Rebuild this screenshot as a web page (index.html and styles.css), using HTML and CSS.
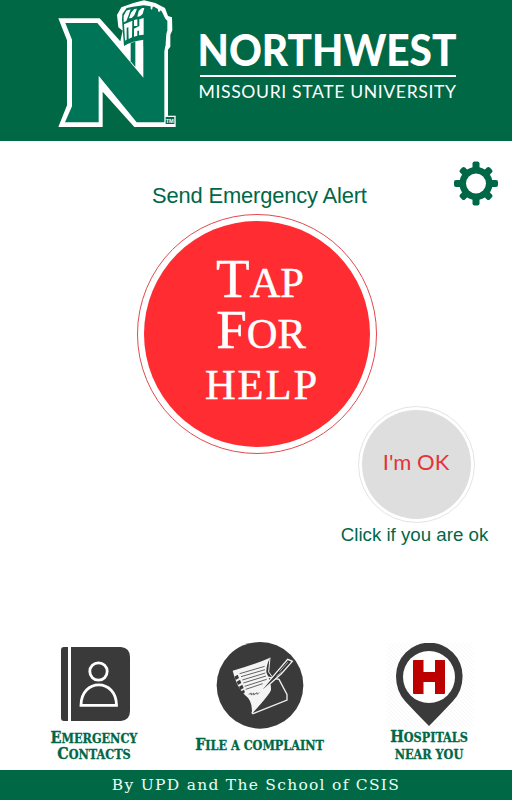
FILE: index.html
```
<!DOCTYPE html>
<html lang="en">
<head>
<meta charset="utf-8">
<title>Northwest Emergency Alert</title>
<link rel="stylesheet" href="styles.css">
</head>
<body>
<header class="banner">
  <svg class="emblem" viewBox="0 0 405 420" aria-hidden="true">
    <path class="white" d="M25 55H149L211 124L218 92L205 82L201 45L214 22L250 9L282 1L316 9L345 24L354 48L366 52L367 91L361 104V140L354 149V347H377V381H253L158 275V381H25L51 316V121Z"/>
    <path class="teal" d="M46 69H142L280 233V110L281 38L297 29L329 38L344 66L350 92L346 138L343 154V367H260L146 227V367H45L66 319V119Z"/>
    <path class="teal" d="M217 42L230 24L249 20L281 16L312 20L335 34L346 56L352 62L352 92L346 104V138H281V119Q245 123 222 138L219 100L216 60Z"/>
    <path class="white" d="M221 47l8-15 13-4-7 20-6 15-8 4ZM243 38l10-11 8-1-8 20-8 8-8 1ZM266 33l10-9h7l-5 18-8 7-8 1Z"/>
    <path class="white" d="M222 73L247 62L246 112L236 117L235 82L230 83V119L225 122ZM252 60L262 58V78H252ZM268 58L281 54V104L267 106V92H262V107L252 110V86L268 78Z"/>
    <path class="teal" d="M242 129L256 125V201L242 184Z"/>
    <path class="white" d="M302 17h7l-3 12-4-2ZM324 24l7 5-3 8-4-4Z"/>
    <path d="M347 351H373V372H347Z" fill="#006845"/>
    <text class="tm" x="347" y="368">TM</text>
  </svg>
  <svg class="wordmark" viewBox="0 0 260 70" role="img">
    <text class="name" x="-1.500" y="32.500" textLength="259" lengthAdjust="spacingAndGlyphs">NORTHWEST</text>
    <rect x="1" y="42" width="256" height="2" class="white"/>
    <text class="sub" x="-.5" y="64.500" textLength="257.500">MISSOURI STATE UNIVERSITY</text>
  </svg>
</header>
<main>
  <div class="top-row">
    <h1>Send Emergency Alert</h1>
    <button class="settings" aria-label="Settings">
      <svg viewBox="-22 -22 44 44">
        <g class="gear"><rect x="-3.500" y="-22" width="7" height="44" rx="2"/><rect x="-3.500" y="-21" width="7" height="42" rx="2" transform="rotate(45)"/><rect x="-3.500" y="-22" width="7" height="44" rx="2" transform="rotate(90)"/><rect x="-3.500" y="-21" width="7" height="42" rx="2" transform="rotate(135)"/><circle r="16.600"/></g>
        <circle r="10" fill="#fff"/>
      </svg>
    </button>
  </div>
  <button class="help">
    <span class="disc"><span class="l1">T<small>AP</small></span><span class="l2">F<small>OR</small></span><span class="l3"><small>HELP</small></span></span>
  </button>
  <section class="safe">
    <button class="ok"><span class="disc">I'm OK</span></button>
    <p>Click if you are ok</p>
  </section>
  <nav>
    <a class="contacts">
      <svg width="70" height="75" viewBox="0 0 70 75">
        <path class="dark" d="M3 0H7V74H3Q0 74 0 71V3Q0 0 3 0ZM10 0H60Q69 1 69 10V64Q69 73 60 74H10Z"/>
        <g class="person"><circle cx="37.500" cy="24.500" r="8.700"/><path d="M20 58.300C20 31 55.500 31 55.500 58.300Z"/></g>
      </svg>
      <span class="label"><span>E<small>MERGENCY</small></span><span>C<small>ONTACTS</small></span></span>
    </a>
    <a class="complaint">
      <svg width="88" height="88" viewBox="92 20 264 264">
        <circle class="dark" cx="224" cy="150" r="130"/>
        <path d="M245 125L281 132L305 177V194L203 235L200 230" fill="none" stroke="#eee" stroke-width="4"/>
        <path d="M142 106Q210 87 254 67Q242 91 243 111Q258 144 257 164Q251 180 199 236Q204 197 178 178Q153 153 142 106Z" fill="#f4f4f4"/>
        <path d="M254 67L250 110L262 126" fill="none" stroke="#f4f4f4" stroke-width="3"/>
        <path d="M163 115L238 93M167 124L239 103M171 134L240 113M174 143L242 122M178 153L244 132M181 162L232 145" stroke="#444" stroke-width="2.500"/>
        <path d="M147 124l10-6 4 10-10 6ZM154 139l10-6 4 10-10 6ZM161 154l10-6 4 10-10 6ZM168 168l8-5 3 8-8 5Z" class="dark"/>
        <path d="M190 177l8-4-1 6 9-6-1 6 10-7 0 5 8-6" fill="none" stroke="#333" stroke-width="2"/>
        <path d="M224 169L278 106L307 72L321 78L288 115L230 167Z" fill="#333" stroke="#f4f4f4" stroke-width="4"/>
        <path d="M283 109L308 80M273 123L289 110" stroke="#ddd" stroke-width="2"/>
      </svg>
      <span class="label"><span>F<small>ILE A COMPLAINT</small></span></span>
    </a>
    <a class="hospitals">
      <svg width="86" height="84" viewBox="0 0 86 84">
        <defs><pattern id="hatch" width="4" height="4" patternUnits="userSpaceOnUse"><path d="M0 0L4 4" stroke="#f3f3f3" stroke-width=".7"/></pattern></defs>
        <rect width="86" height="84" fill="url(#hatch)"/>
        <path class="dark" d="M42 83Q31 72 18 58Q9 48 9 33A33.300 33.300 0 0 1 75.600 33Q75.600 48 66 58Q52 73 42 83Z"/>
        <circle cx="42" cy="34" r="26" fill="#fff"/>
        <path d="M27 17H36.500V29H48V17H57.500Q58 17 58 18V50Q58 51 57 51H48V39H36.500V51H27Q26 51 26 50V18Q26 17 27 17Z" fill="#bd0000"/>
      </svg>
      <span class="label"><span>H<small>OSPITALS</small></span><span><small>NEAR YOU</small></span></span>
    </a>
  </nav>
</main>
<footer>By UPD and The School of CSIS</footer>
</body>
</html>
```
FILE: styles.css
```
* { box-sizing: border-box; }
body { margin: 0; width: 512px; height: 800px; display: flex; flex-direction: column; background: #fff; color: #006747; font-family: "Liberation Sans", Arial, sans-serif; overflow: hidden; }
button { border: 0; background: none; padding: 0; font: inherit; color: inherit; display: block; }
.banner { height: 141px; background: #006845; display: flex; padding-left: 50px; flex: none; }
.emblem { width: 135px; height: 140px; }
.wordmark { width: 260px; height: 70px; margin: 33px 0 0 14px; overflow: visible; }
.white { fill: #fff; }
.teal { fill: #007456; }
.tm { fill: #fff; font: bold 17px "Liberation Sans", Arial, sans-serif; }
.wordmark text { fill: #fff; }
.name { font: 900 43px Lato, sans-serif; }
.sub { font: 17.600px Lato, sans-serif; }
main { flex: 1; display: flex; flex-direction: column; }
.top-row { height: 73px; padding: 20px 14px 0 152px; display: flex; justify-content: space-between; align-items: flex-start; }
h1 { margin: 22px 0 0; font-size: 21.900px; line-height: 26px; font-weight: 400; letter-spacing: -.15px; white-space: nowrap; }
.settings { width: 44px; height: 45px; }
.settings svg { display: block; width: 44px; height: 45px; }
.gear { fill: #006747; }
.disc { display: flex; flex-direction: column; align-items: center; border-radius: 50%; }
.help { width: 240px; height: 240px; margin-left: 137px; border: 1px solid #e04a4e; border-radius: 50%; padding: 6px; flex: none; }
.help .disc { width: 226px; height: 226px; background: #ff2d32; color: #fff; font: 55px/51px "Liberation Serif", serif; padding-top: 32px; -webkit-text-stroke: .5px #fff; }
.disc span { display: block; height: 51px; white-space: nowrap; }
.disc small { font-size: 42.500px; line-height: 1; }
.l1 { letter-spacing: 0; margin-left: 6px; }
.l2 { letter-spacing: 0; margin-left: 8px; }
.l3 { letter-spacing: 2px; margin-left: 10px; }
.safe { width: 160px; margin: -48px 0 0 336px; display: flex; flex-direction: column; align-items: center; }
.ok { width: 117px; height: 117px; border: 1px solid #e4e4e4; border-radius: 50%; padding: 3px; }
.ok .disc { width: 109px; height: 109px; background: #dedede; color: #e3343a; font: 22px/26px Lato, sans-serif; padding-top: 39px; }
.safe p { margin: 0 3px 0 0; font-size: 18.700px; line-height: 24px; white-space: nowrap; }
nav { display: grid; grid-template-columns: 148px 136px 148px; margin: auto 0 0 20px; height: 129px; align-items: start; }
nav a { display: flex; flex-direction: column; align-items: center; }
nav svg { display: block; }
.dark { fill: #3b3a3b; }
.person { fill: none; stroke: #fff; stroke-width: 2.800; }
.contacts { padding-top: 6px; }
.contacts svg { margin-left: 3px; }
.complaint { padding-top: 1px; margin-left: 47px; }
.hospitals { padding-top: 2px; margin-left: 102px; }
.hospitals svg { margin-left: 2px; }
.label { font: bold 16px/16px "DejaVu Serif Condensed", "DejaVu Serif", serif; text-align: center; -webkit-text-stroke: .3px #006747; }
.label span { display: block; white-space: nowrap; }
.label small { font-size: 12.500px; line-height: 1; }
.contacts .label { margin-top: 8px; }
.complaint .label { margin-top: 7px; }
.hospitals .label { margin-top: 1px; line-height: 17px; }
footer { height: 30px; flex: none; background: #006845; color: #e9fff5; font: 15.500px/30px "DejaVu Serif", serif; letter-spacing: 1.270px; text-align: center; white-space: nowrap; }
```
